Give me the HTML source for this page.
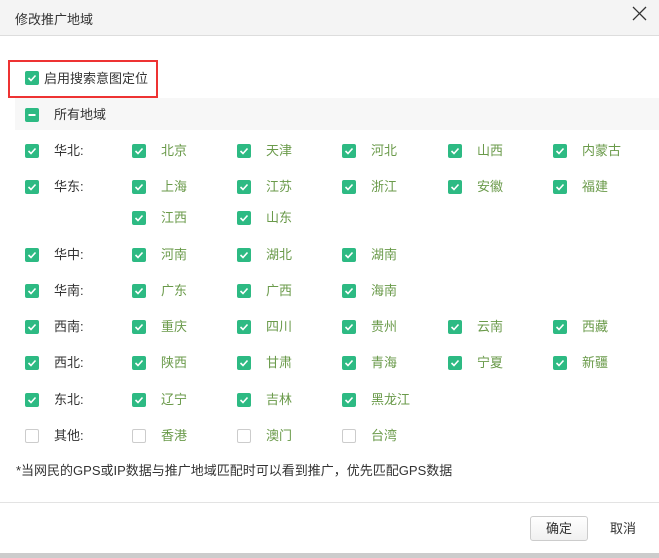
<!DOCTYPE html>
<html><head><meta charset="utf-8"><style>
*{margin:0;padding:0;box-sizing:border-box}
body{width:659px;height:558px;background:#fff;font-family:"Liberation Sans","Noto Sans CJK SC",sans-serif;font-size:13px;color:#333;position:relative;overflow:hidden}
.hd{position:absolute;left:0;top:0;width:659px;height:36px;background:#f4f4f4;border-bottom:1px solid #ddd}
.hd span{position:absolute;left:15px;top:9px;font-size:13px;color:#333}
.a{position:absolute}
.cb{position:absolute;width:14px;height:14px;background:#2dba83;border-radius:2px}
.cb svg{position:absolute;left:2px;top:2px}
.ub{position:absolute;width:14px;height:14px;border:1px solid #ccc;border-radius:2px;background:#fff}
.t{position:absolute;white-space:nowrap;line-height:14px}
.g{color:#6a9a4a}
</style></head><body>
<div class="hd"><span>修改推广地域</span></div>
<svg class="a" style="left:632px;top:6px" width="15" height="15"><path d="M1 1L14 14M14 1L1 14" stroke="#333" stroke-width="1.3"/></svg>
<div class="a" style="left:8px;top:60px;width:150px;height:38px;border:2px solid #ee3333"></div>
<div class="cb" style="left:25px;top:71px"><svg width="10" height="10"><path d="M1.5 5L4 7.5L8.5 2.5" stroke="#fff" stroke-width="1.6" fill="none"/></svg></div>
<div class="t" style="left:44px;top:72px;font-size:13px">启用搜索意图定位</div>
<div class="a" style="left:15px;top:98px;width:644px;height:32px;background:#f7f7f7"></div>
<div class="cb" style="left:25px;top:108px"><svg width="10" height="10"><path d="M1.5 5H8.5" stroke="#fff" stroke-width="2"/></svg></div>
<div class="t" style="left:54px;top:108px">所有地域</div>
<div id="rows"></div>
<div class="t" style="left:16px;top:464px">*当网民的GPS或IP数据与推广地域匹配时可以看到推广，优先匹配GPS数据</div>
<div class="a" style="left:0;top:502px;width:659px;height:1px;background:#e3e3e3"></div>
<div class="a" style="left:530px;top:516px;width:58px;height:25px;border:1px solid #ccc;border-radius:3px;background:linear-gradient(#fff,#f0f0f0);text-align:center;line-height:23px">确定</div>
<div class="t" style="left:610px;top:522px">取消</div>
<div class="a" style="left:0;top:553px;width:659px;height:5px;background:#ccc"></div>
<script>
var ck='<svg width="10" height="10"><path d="M1.5 5L4 7.5L8.5 2.5" stroke="#fff" stroke-width="1.6" fill="none"/></svg>';
var rows=[[144,'华北:',['北京','天津','河北','山西','内蒙古']],[180,'华东:',['上海','江苏','浙江','安徽','福建']],[211,'',['江西','山东']],[248,'华中:',['河南','湖北','湖南']],[284,'华南:',['广东','广西','海南']],[320,'西南:',['重庆','四川','贵州','云南','西藏']],[356,'西北:',['陕西','甘肃','青海','宁夏','新疆']],[393,'东北:',['辽宁','吉林','黑龙江']],[429,'其他:',['香港','澳门','台湾'],1]];
var xs=[132,237,342,448,553],h='';
rows.forEach(function(r){var y=r[0],u=r[3];
if(r[1]){h+=u?'<div class="ub" style="left:25px;top:'+y+'px"></div>':'<div class="cb" style="left:25px;top:'+y+'px">'+ck+'</div>';
h+='<div class="t" style="left:54px;top:'+y+'px">'+r[1]+'</div>';}
r[2].forEach(function(c,i){var x=xs[i];
h+=u?'<div class="ub" style="left:'+x+'px;top:'+y+'px"></div>':'<div class="cb" style="left:'+x+'px;top:'+y+'px">'+ck+'</div>';
h+='<div class="t g" style="left:'+(x+29)+'px;top:'+y+'px">'+c+'</div>';});});
document.getElementById('rows').innerHTML=h;
</script>
</body></html>
